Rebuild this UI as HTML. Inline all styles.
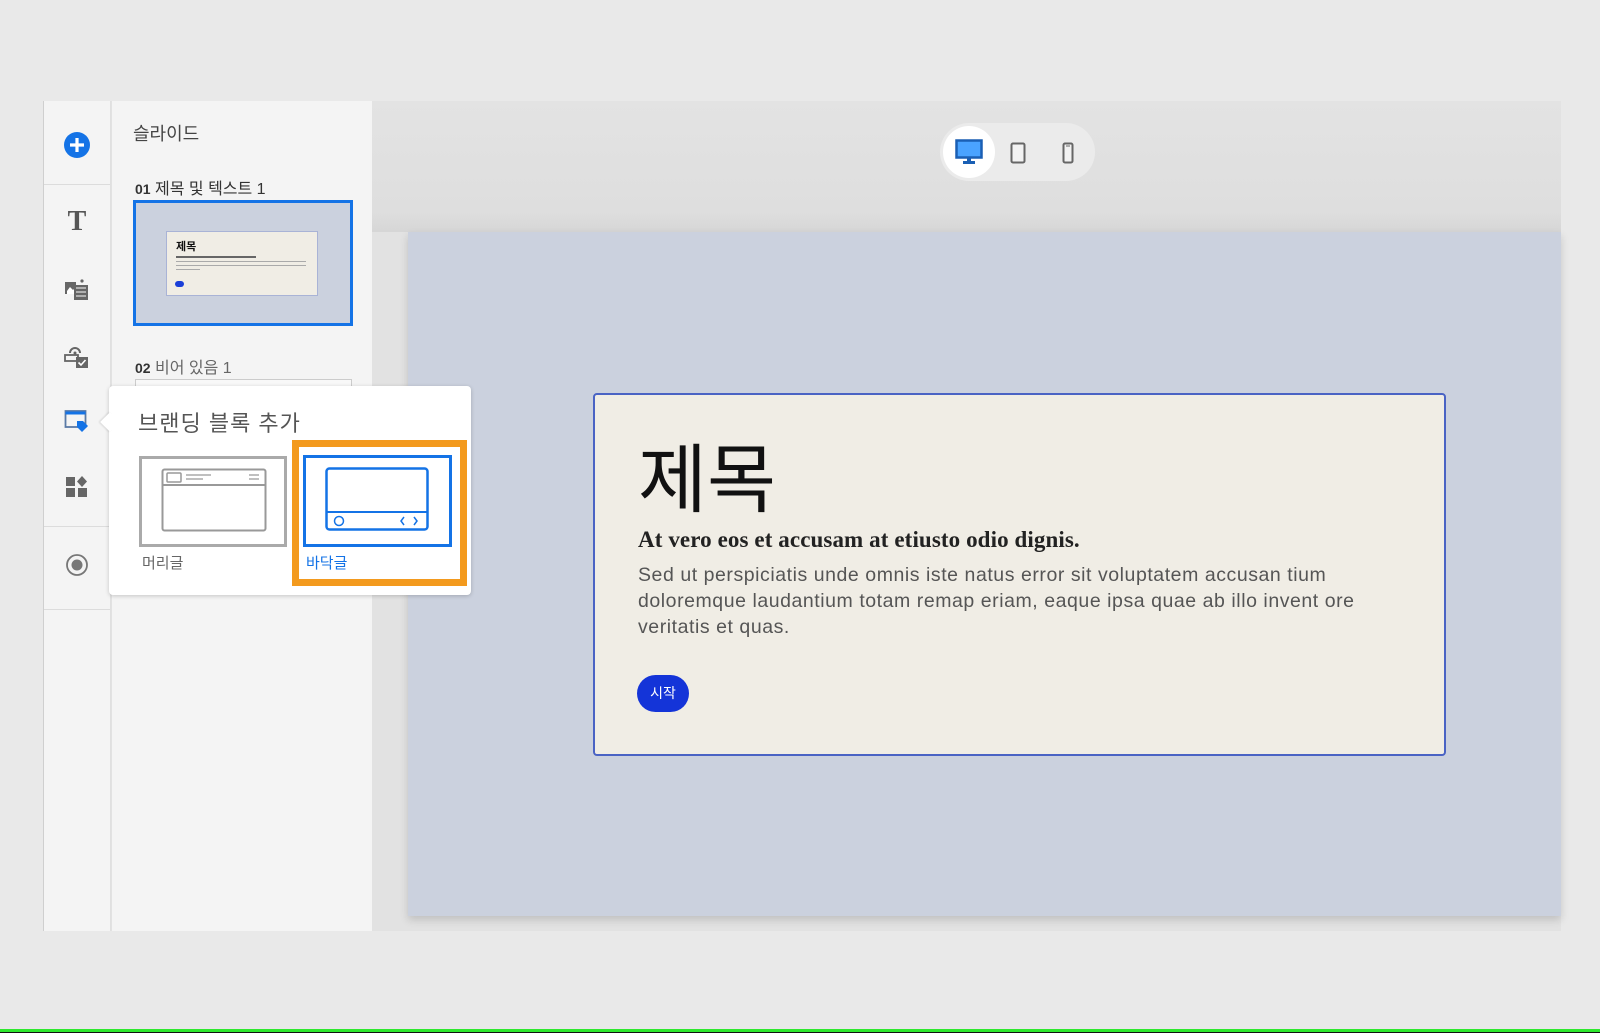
<!DOCTYPE html>
<html><head><meta charset="utf-8"><style>
*{box-sizing:border-box;margin:0;padding:0}
body{width:1600px;height:1033px;background:#e9e9e9;position:relative;overflow:hidden;font-family:"Liberation Sans","Noto Sans CJK KR",sans-serif}
.abs{position:absolute}
.kr{font-family:"Liberation Sans","Noto Sans CJK KR",sans-serif}
</style></head><body>
<div class="abs" style="left:43px;top:101px;width:1518px;height:830px;background:#e2e2e2"></div>
<div class="abs" style="left:43px;top:101px;width:68px;height:830px;background:#f4f4f4;border-left:1px solid #cfcfcf;border-right:1px solid #e0e0e0"></div>
<div class="abs" style="left:44px;top:184px;width:66px;height:1px;background:#dcdcdc"></div>
<div class="abs" style="left:44px;top:526px;width:66px;height:1px;background:#dcdcdc"></div>
<div class="abs" style="left:44px;top:609px;width:66px;height:1px;background:#dcdcdc"></div>
<svg class="abs" style="left:63px;top:131px" width="28" height="28" viewBox="0 0 28 28"><circle cx="14" cy="14" r="13" fill="#1473e6"/><path d="M14 7v14M7 14h14" stroke="#fff" stroke-width="3.2"/></svg>
<div class="abs" style="left:65px;top:206px;width:24px;font:bold 28px 'Liberation Serif',serif;color:#555;text-align:center">T</div>
<svg class="abs" style="left:64px;top:277px" width="26" height="24" viewBox="0 0 26 24"><path d="M1 5h11v12H1z" fill="#666"/><path d="M3 14l3-4 3 3 2-2 1 1v5H3z" fill="#fff"/><rect x="10" y="8" width="14" height="15" fill="#666"/><path d="M12 11h10M12 15h10M12 19h10" stroke="#ddd" stroke-width="1.3"/><circle cx="18" cy="4" r="1.6" fill="#666"/></svg>
<svg class="abs" style="left:64px;top:345px" width="26" height="24" viewBox="0 0 26 24"><path d="M6 8a5 5 0 0110 0" fill="none" stroke="#666" stroke-width="2"/><circle cx="11" cy="8" r="1.5" fill="#666"/><rect x="1" y="10" width="13" height="6" fill="none" stroke="#666" stroke-width="1.8"/><rect x="12" y="12" width="12" height="11" fill="#666"/><path d="M14.5 17.5l2.5 2.5 4.5-5" stroke="#fff" stroke-width="1.6" fill="none"/></svg>
<svg class="abs" style="left:64px;top:409px" width="26" height="24" viewBox="0 0 26 24"><rect x="1.5" y="2" width="20" height="16" fill="none" stroke="#5a7aa6" stroke-width="1.8"/><path d="M1.5 4h20" stroke="#1473e6" stroke-width="3"/><path d="M13 12h6l5 5-6 6-5-5z" fill="#1473e6"/></svg>
<svg class="abs" style="left:66px;top:476px" width="22" height="22" viewBox="0 0 22 22"><rect x="0" y="1" width="9" height="9" fill="#666"/><path d="M16 0l5 5.5-5 5.5-5-5.5z" fill="#666"/><rect x="0" y="12" width="9" height="9" fill="#666"/><rect x="12" y="12" width="9" height="9" fill="#666"/></svg>
<svg class="abs" style="left:65px;top:553px" width="24" height="24" viewBox="0 0 24 24"><circle cx="12" cy="12" r="10" fill="none" stroke="#777" stroke-width="1.8"/><circle cx="12" cy="12" r="5.5" fill="#777"/></svg>
<div class="abs" style="left:112px;top:101px;width:260px;height:830px;background:#f4f4f4"></div>
<div class="abs kr" style="left:133px;top:120px;font-size:18px;color:#444">슬라이드</div>
<div class="abs kr" style="left:135px;top:175px;font-size:16px;color:#333"><b style="font-size:14px">01</b> 제목 및 텍스트 1</div>
<div class="abs" style="left:133px;top:200px;width:220px;height:126px;background:#cbd1de;border:3px solid #1473e6"></div>
<div class="abs" style="left:166px;top:231px;width:152px;height:65px;background:#f0ede5;border:1px solid #a9b3d6">
 <div class="kr" style="position:absolute;left:9px;top:6px;font-size:11px;font-weight:bold;color:#111">제목</div>
 <div style="position:absolute;left:9px;top:24px;width:80px;height:2px;background:#666"></div>
 <div style="position:absolute;left:9px;top:29px;width:130px;height:1px;background:#aaa"></div>
 <div style="position:absolute;left:9px;top:33px;width:130px;height:1px;background:#aaa"></div>
 <div style="position:absolute;left:9px;top:37px;width:24px;height:1px;background:#aaa"></div>
 <div style="position:absolute;left:8px;top:49px;width:9px;height:6px;border-radius:3px;background:#1a3fd8"></div>
</div>
<div class="abs kr" style="left:135px;top:354px;font-size:16px;color:#666"><b style="font-size:14px;color:#333">02</b> 비어 있음 1</div>
<div class="abs" style="left:135px;top:379px;width:217px;height:10px;border:1px solid #ccc;border-bottom:none;background:#f8f8f8"></div>
<div class="abs" style="left:372px;top:101px;width:1189px;height:131px;background:linear-gradient(#e3e3e3,#dedede 85%,#d6d6d6)"></div>
<div class="abs" style="left:940px;top:123px;width:155px;height:58px;border-radius:29px;background:#ebebeb"></div>
<div class="abs" style="left:943px;top:126px;width:52px;height:52px;border-radius:26px;background:#fff"></div>
<svg class="abs" style="left:955px;top:139px" width="28" height="26" viewBox="0 0 28 26"><rect x="1.5" y="1.5" width="25" height="17" fill="#4aa3ff" stroke="#1a5fb4" stroke-width="2.5"/><rect x="12" y="19" width="4" height="3" fill="#1a5fb4"/><rect x="8" y="22" width="12" height="3" fill="#1a5fb4"/></svg>
<svg class="abs" style="left:1010px;top:142px" width="16" height="22" viewBox="0 0 16 22"><rect x="1.5" y="1.5" width="13" height="19" rx="1.5" fill="#f2f2f2" stroke="#666" stroke-width="2"/></svg>
<svg class="abs" style="left:1062px;top:142px" width="12" height="22" viewBox="0 0 12 22"><rect x="1.5" y="1.5" width="9" height="19" rx="1.5" fill="#f2f2f2" stroke="#666" stroke-width="2"/><path d="M4 4h4" stroke="#666"/></svg>
<div class="abs" style="left:408px;top:232px;width:1153px;height:684px;background:#cbd1de;box-shadow:0 4px 8px rgba(0,0,0,.15)"></div>
<div class="abs" style="left:593px;top:393px;width:853px;height:363px;background:#f0ede5;border:2px solid #4a63c4;border-radius:4px"></div>
<div class="abs kr" style="left:638px;top:435px;font-size:75px;line-height:90px;color:#111">제목</div>
<div class="abs" style="left:638px;top:527px;font:bold 23px 'Liberation Serif',serif;letter-spacing:0.1px;color:#222">At vero eos et accusam at etiusto odio dignis.</div>
<div class="abs" style="left:638px;top:562px;width:765px;font-size:19.5px;letter-spacing:0.55px;line-height:26px;color:#555">Sed ut perspiciatis unde omnis iste natus error sit voluptatem accusan tium doloremque laudantium totam remap eriam, eaque ipsa quae ab illo invent ore veritatis et quas.</div>
<div class="abs kr" style="left:637px;top:675px;width:52px;height:37px;border-radius:19px;background:#1434d8;color:#fff;font-size:14px;line-height:36px;text-align:center">시작</div>
<div class="abs" style="left:109px;top:386px;width:362px;height:209px;background:#fff;border-radius:4px;box-shadow:0 1px 4px rgba(0,0,0,.2)"></div>
<div class="abs" style="left:103px;top:415px;width:14px;height:14px;background:#fff;transform:rotate(45deg);box-shadow:-1px 1px 2px rgba(0,0,0,.12)"></div>
<div class="abs" style="left:112px;top:410px;width:10px;height:24px;background:#fff"></div>
<div class="abs kr" style="left:138px;top:406px;font-size:22px;color:#555;letter-spacing:1px">브랜딩 블록 추가</div>
<div class="abs" style="left:139px;top:456px;width:148px;height:91px;border:3px solid #aaa"></div>
<svg class="abs" style="left:161px;top:468px" width="106" height="64" viewBox="0 0 106 64"><rect x="1.5" y="1.5" width="103" height="61" rx="2" fill="none" stroke="#999" stroke-width="2"/><path d="M1.5 17h103" stroke="#999" stroke-width="2"/><rect x="6" y="5" width="14" height="9" rx="1" fill="none" stroke="#999" stroke-width="1.5"/><path d="M25 7h25M25 11h17M88 7h10M88 11h10" stroke="#aaa" stroke-width="1.5"/></svg>
<div class="abs kr" style="left:142px;top:552px;font-size:15px;color:#666">머리글</div>
<div class="abs" style="left:292px;top:440px;width:175px;height:146px;border:7px solid #f39a1e"></div>
<div class="abs" style="left:303px;top:455px;width:149px;height:92px;border:3px solid #1473e6"></div>
<svg class="abs" style="left:325px;top:467px" width="104" height="64" viewBox="0 0 104 64"><rect x="1.5" y="1.5" width="101" height="61" rx="3" fill="none" stroke="#1473e6" stroke-width="2.5"/><path d="M1.5 45h101" stroke="#1473e6" stroke-width="2"/><circle cx="14" cy="54" r="4.5" fill="none" stroke="#1473e6" stroke-width="1.5"/><path d="M79 50l-3 4 3 4M89 50l3 4-3 4" fill="none" stroke="#1473e6" stroke-width="1.5"/></svg>
<div class="abs kr" style="left:306px;top:552px;font-size:15px;color:#1473e6">바닥글</div>
<div class="abs" style="left:0;top:1029px;width:1600px;height:3px;background:#2ee82e"></div>
<div class="abs" style="left:0;top:1032px;width:1600px;height:1px;background:#111"></div>
</body></html>
